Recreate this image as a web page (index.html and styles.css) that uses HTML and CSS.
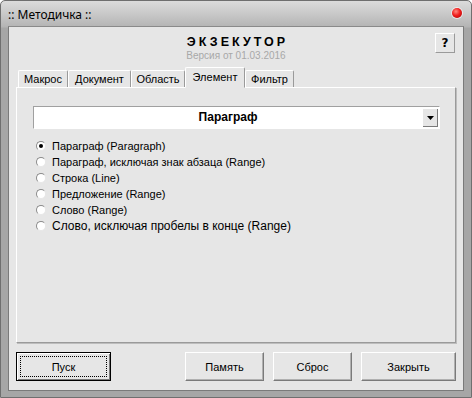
FILE: index.html
```html
<!DOCTYPE html>
<html lang="ru">
<head>
  <meta charset="UTF-8" />
  <title>:: Методичка ::</title>
  <link rel="stylesheet" href="styles.css">
</head>
<body>

  <div class="window">
    <div class="titlebar">
      <span class="title">:: Методичка ::</span>
      <span class="close-dot"></span>
    </div>

    <div class="client">
      <div class="header">
        <div></div>
        <div class="brand">
          <div class="brand-name">ЭКЗЕКУТОР</div>
          <div class="brand-ver">Версия от 01.03.2016</div>
        </div>
        <button class="help-btn">?</button>
      </div>

      <div class="tabs">
        <div class="tab tab-1">Макрос</div>
        <div class="tab tab-2">Документ</div>
        <div class="tab tab-3">Область</div>
        <div class="tab tab-4 active">Элемент</div>
        <div class="tab tab-5">Фильтр</div>
      </div>

      <div class="panel">
        <div class="combo">
          <span class="combo-text">Параграф</span>
          <span class="combo-btn">
            <svg width="7" height="4" viewBox="0 0 7 4"><path d="M0 0h7L3.5 4z" fill="#000"/></svg>
          </span>
        </div>

        <ul class="radios">
          <li><span class="radio checked"></span>Параграф (Paragraph)</li>
          <li><span class="radio"></span>Параграф, исключая знак абзаца (Range)</li>
          <li><span class="radio"></span>Строка (Line)</li>
          <li><span class="radio"></span>Предложение (Range)</li>
          <li><span class="radio"></span>Слово (Range)</li>
          <li class="big"><span class="radio"></span>Слово, исключая пробелы в конце (Range)</li>
        </ul>
      </div>

      <div class="buttons">
        <button class="btn btn-default"><span class="focus">Пуск</span></button>
        <button class="btn btn-mid push">Память</button>
        <button class="btn btn-mid">Сброс</button>
        <button class="btn">Закрыть</button>
      </div>
    </div>
  </div>

</body>
</html>
```

FILE: styles.css
```css
body {
  margin: 0;
  font-family: "Liberation Sans", Arial, sans-serif;
  font-size: 11px;
  color: #000;
  background: #fff;
}

.window {
  width: 472px;
  height: 398px;
  box-sizing: border-box;
  display: flex;
  flex-direction: column;
  padding: 0 7px 6px 7px;
  border: 1px solid #6f6f6f;
  border-radius: 5px 5px 0 0;
  background: linear-gradient(to bottom, #dcdcdc 0px, #b4b4b4 26px, #a6a6a6 27px, #a6a6a6 100%);
}

.titlebar {
  height: 26px;
  display: flex;
  align-items: center;
  justify-content: space-between;
}

.title {
  font-family: "Noto Sans", sans-serif;
  font-size: 12px;
  margin-top: 1px;
}

.close-dot {
  width: 10px;
  height: 10px;
  border-radius: 50%;
  margin-right: 2px;
  margin-top: -1px;
  background: radial-gradient(circle at 40% 35%, #ff8a80 0, #f01e1e 45%, #a80000 100%);
  box-shadow: 0 0 0 1px rgba(255, 255, 255, 0.6);
}

.client {
  flex: 1;
  display: flex;
  flex-direction: column;
  background: #e6e6e6;
  border: 1px solid #7a7a7a;
  border-top-color: #8a8a8a;
  padding: 0 7px 9px 7px;
}

.header {
  display: grid;
  grid-template-columns: 1fr auto 1fr;
  align-items: start;
  padding-top: 6px;
}

.brand {
  text-align: center;
}

.brand-name {
  font-weight: bold;
  font-size: 12.5px;
  letter-spacing: 3px;
  line-height: 16px;
  margin-top: 1px;
  margin-right: -3px;
}

.brand-ver {
  color: #a8a8a8;
  font-size: 10px;
  line-height: 12px;
}

.help-btn {
  justify-self: end;
  width: 20px;
  height: 20px;
  padding: 0;
  margin-right: 1px;
  font-family: "DejaVu Sans", sans-serif;
  font-weight: bold;
  font-size: 12px;
  background: #e6e6e6;
  border: 1px solid #fff;
  border-right-color: #9a9a9a;
  border-bottom-color: #9a9a9a;
}

.tabs {
  display: flex;
  align-items: flex-end;
  margin-top: 5px;
  padding-left: 2px;
  height: 20px;
}

.tab {
  box-sizing: border-box;
  height: 18px;
  line-height: 16px;
  text-align: center;
  background: #e6e6e6;
  border-top: 1px solid #fff;
  border-left: 1px solid #fff;
  border-right: 1px solid #9a9a9a;
  border-radius: 2px 2px 0 0;
  font-size: 11px;
  margin-bottom: -1px;
}

.tab-1 { width: 50px; }
.tab-2 { width: 63px; }
.tab-3 { width: 54px; }
.tab-4 { width: 60px; }
.tab-5 { width: 49px; }

.tab.active {
  height: 21px;
  line-height: 18px;
  position: relative;
  z-index: 1;
  border-bottom: 1px solid #e6e6e6;
}

.panel {
  height: 256px;
  box-sizing: border-box;
  border: 1px solid #fff;
  border-right-color: #9a9a9a;
  border-bottom-color: #9a9a9a;
  box-shadow: 1px 1px 0 #bdbdbd;
  padding: 18px 15px 0 16px;
}

.combo {
  height: 23px;
  box-sizing: border-box;
  display: flex;
  align-items: stretch;
  background: #fff;
  border: 1px solid #a0a0a0;
  border-right-color: #fff;
  border-bottom-color: #fff;
}

.combo-text {
  flex: 1;
  text-align: center;
  font-weight: bold;
  font-size: 12px;
  line-height: 21px;
}

.combo-btn {
  width: 15px;
  margin: 1px 1px 1px 0;
  background: #e6e6e6;
  border-left: 1px solid #fff;
  border-top: 1px solid #fff;
  box-shadow: inset -1px -1px 0 #7a7a7a;
  display: flex;
  align-items: center;
  justify-content: center;
}

.radios {
  list-style: none;
  margin: 9px 0 0 0;
  padding: 0 0 0 3px;
}

.radios li {
  height: 16px;
  display: flex;
  align-items: center;
  font-size: 11px;
}

.radios li.big {
  font-size: 12px;
}

.radio {
  width: 10px;
  height: 10px;
  box-sizing: border-box;
  border-radius: 50%;
  margin-right: 6px;
  background: #fff;
  border: 1px solid #8a8a8a;
  border-right-color: #e6e6e6;
  border-bottom-color: #e6e6e6;
  display: flex;
  align-items: center;
  justify-content: center;
}

.radio.checked::after {
  content: "";
  width: 4px;
  height: 4px;
  border-radius: 50%;
  background: #000;
}

.buttons {
  display: flex;
  gap: 9px;
  margin-top: 9px;
}

.btn {
  width: 95px;
  height: 29px;
  padding: 0;
  font-family: "Liberation Sans", Arial, sans-serif;
  font-size: 11px;
  color: #000;
  background: #e6e6e6;
  border: 1px solid #fff;
  border-right-color: #7a7a7a;
  border-bottom-color: #7a7a7a;
  box-shadow: inset -1px -1px 0 #b0b0b0;
}

.btn-mid {
  width: 79px;
}

.push {
  margin-left: auto;
}

.btn-default {
  border: 1px solid #000;
  box-shadow: inset 1px 1px 0 #fff, inset -1px -1px 0 #7a7a7a;
  padding: 3px;
}

.focus {
  display: flex;
  align-items: center;
  justify-content: center;
  height: 100%;
  box-sizing: border-box;
  border: 1px dotted #000;
}
```
